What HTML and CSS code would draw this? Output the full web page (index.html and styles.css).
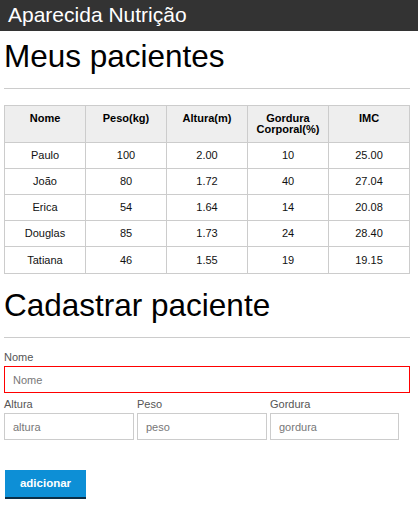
FILE: index.html
```html
<!DOCTYPE html>
<html lang="pt-BR">
<head>
<meta charset="utf-8">
<title>Aparecida Nutrição</title>
<link rel="stylesheet" href="styles.css">
</head>
<body>
<header class="topbar">Aparecida Nutrição</header>
<main class="container">
  <h1 class="title">Meus pacientes</h1>
  <hr class="rule">
  <table class="patients">
    <thead>
      <tr>
        <th>Nome</th>
        <th>Peso(kg)</th>
        <th>Altura(m)</th>
        <th>Gordura Corporal(%)</th>
        <th>IMC</th>
      </tr>
    </thead>
    <tbody>
      <tr><td>Paulo</td><td>100</td><td>2.00</td><td>10</td><td>25.00</td></tr>
      <tr><td>João</td><td>80</td><td>1.72</td><td>40</td><td>27.04</td></tr>
      <tr><td>Erica</td><td>54</td><td>1.64</td><td>14</td><td>20.08</td></tr>
      <tr><td>Douglas</td><td>85</td><td>1.73</td><td>24</td><td>28.40</td></tr>
      <tr><td>Tatiana</td><td>46</td><td>1.55</td><td>19</td><td>19.15</td></tr>
    </tbody>
  </table>
  <h2 class="title title-second">Cadastrar paciente</h2>
  <hr class="rule rule-form">
  <form class="form">
    <div class="field">
      <label class="label" for="nome">Nome</label>
      <input class="input input-error" id="nome" type="text" placeholder="Nome">
    </div>
    <div class="row">
      <div class="field col">
        <label class="label" for="altura">Altura</label>
        <input class="input" id="altura" type="text" placeholder="altura">
      </div>
      <div class="field col">
        <label class="label" for="peso">Peso</label>
        <input class="input" id="peso" type="text" placeholder="peso">
      </div>
      <div class="field col col-last">
        <label class="label" for="gordura">Gordura</label>
        <input class="input" id="gordura" type="text" placeholder="gordura">
      </div>
    </div>
    <button class="btn" type="button">adicionar</button>
  </form>
</main>
</body>
</html>
```
FILE: styles.css
```css
* { box-sizing: border-box; }
html, body { margin: 0; padding: 0; background: #fff; }
body {
  font-family: "Liberation Sans", Arial, sans-serif;
  color: #000;
}
.topbar {
  height: 31px;
  background: #333;
  color: #fff;
  font-size: 21px;
  line-height: 29px;
  padding: 0 0 2px 8px;
}
.container {
  padding: 0 8px 0 4px;
}
.title {
  font-size: 31.5px;
  font-weight: normal;
  line-height: 37px;
  margin: 7px 0 13px;
}
.title-second {
  margin: 13px 0 13px;
}
.rule {
  border: 0;
  border-top: 1px solid #ccc;
  height: 0;
  margin: 0 0 16px;
  width: 406px;
}
.rule-form { margin-bottom: 13px; }
.patients {
  width: 406px;
  table-layout: fixed;
  border-collapse: separate;
  border-spacing: 0;
  border-top: 1px solid #ccc;
  border-left: 1px solid #ccc;
  font-size: 11px;
}
.patients th, .patients td {
  width: 81px;
  border-right: 1px solid #ccc;
  border-bottom: 1px solid #ccc;
  text-align: center;
  padding: 0 4px;
}
.patients th {
  height: 37px;
  background: #eee;
  font-weight: bold;
  line-height: 11px;
  vertical-align: top;
  padding-top: 7px;
}
.patients td {
  height: 26px;
  vertical-align: middle;
  line-height: 13px;
  color: #111;
}
.patients tbody tr:last-child td { height: 27px; }
.form { margin: 0; }
.label {
  display: block;
  font-size: 11px;
  line-height: 13px;
  color: #555;
  margin-bottom: 2px;
}
.input {
  display: block;
  width: 406px;
  height: 27px;
  border: 1px solid #ccc;
  padding: 0 8px;
  font-family: "Liberation Sans", Arial, sans-serif;
  font-size: 11px;
  color: #333;
  background: #fff;
  outline: none;
}
.input::placeholder { color: #777; }
.input-error { border-color: #f00; }
.row {
  display: flex;
  gap: 3px;
  margin-top: 5px;
}
.col .input { width: 130px; }
.col-last .input { width: 129px; }
.btn {
  display: block;
  margin: 30px 0 0 1px;
  width: 81px;
  height: 29px;
  padding: 0;
  border: 0;
  border-bottom: 2px solid #0a2e47;
  background: #0d8fd6;
  color: #fff;
  font-family: "Liberation Sans", Arial, sans-serif;
  font-size: 11.5px;
  font-weight: bold;
  line-height: 25px;
  text-align: center;
}
```
